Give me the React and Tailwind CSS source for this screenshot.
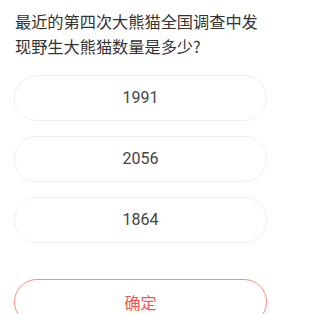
export default function App() {
  const font = { fontFamily: '"Noto Sans CJK SC", "Noto Sans", Roboto, sans-serif' };
  const options = ["1991", "2056", "1864"];
  return (
    <div className="w-[284px] h-[314px] bg-white overflow-hidden" style={font}>
      <div className="pl-[14px] pr-[17px] pt-[9px]">
        <p className="w-[256px] pl-px text-[16.2px] leading-[25px] text-[#333333]">
          最近的第四次大熊猫全国调查中发现野生大熊猫数量是多少?
        </p>
        <div className="mt-[16px] flex flex-col gap-[15px]">
          {options.map((o) => (
            <div
              key={o}
              className="h-[46px] rounded-full border border-[#efefef] flex items-center justify-center text-[16px] text-[#444444]"
              style={{ fontFamily: 'Roboto, "Noto Sans", sans-serif' }}
            >
              {o}
            </div>
          ))}
        </div>
        <div className="mt-[36px] h-[46px] rounded-full border border-[#ff8a80] flex items-center justify-center text-[16px] text-[#f5574f]">
          确定
        </div>
      </div>
    </div>
  );
}
